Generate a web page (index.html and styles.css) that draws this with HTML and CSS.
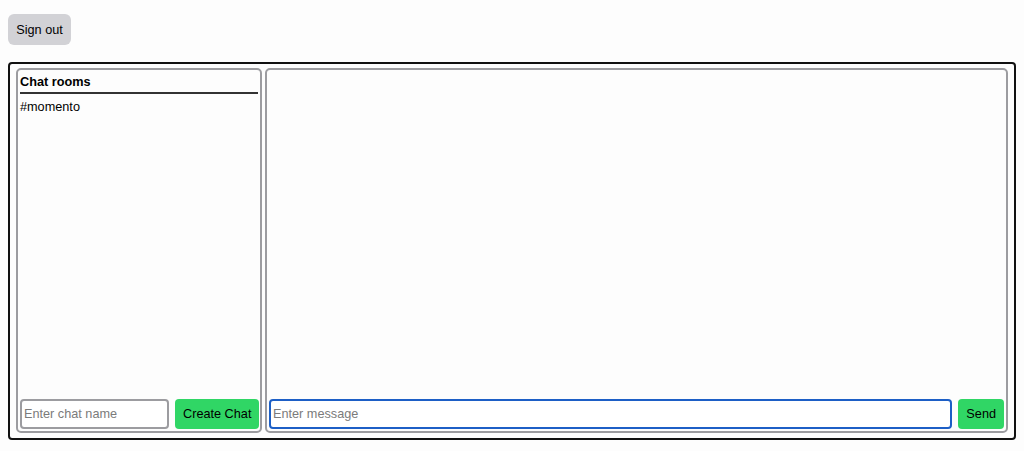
FILE: index.html
```
<!DOCTYPE html>
<html lang="en">
<head>
    <meta charset="UTF-8">
    <meta name="viewport" content="width=device-width, initial-scale=1.0">
    <title>Chat</title>
    <link rel="stylesheet" href="styles.css">
</head>
<body>
    <button type="button" class="signout">Sign out</button>

    <div class="chat-app">
        <div class="rooms">
            <h3 class="rooms-title">Chat rooms</h3>
            <ul class="room-list">
                <li>#momento</li>
            </ul>
            <form class="row-form">
                <input type="text" class="field name-field" placeholder="Enter chat name">
                <button type="submit" class="green-btn">Create Chat</button>
            </form>
        </div>
        <div class="messages">
            <div class="message-list"></div>
            <form class="row-form">
                <input type="text" class="field message-field focused" placeholder="Enter message">
                <button type="submit" class="green-btn">Send</button>
            </form>
        </div>
    </div>
</body>
</html>
```

FILE: styles.css
```
* {
    box-sizing: border-box;
}
body {
    font-family: 'Liberation Sans', Arial, sans-serif;
    font-size: 12.7px;
    color: #000;
    background: #fdfdfd;
    margin: 8px;
}
.signout {
    display: block;
    margin-top: 6px;
    height: 31px;
    width: 63px;
    padding: 0;
    border: none;
    border-radius: 6px;
    background-color: #d2d2d6;
    font-family: inherit;
    font-size: 12.7px;
    color: #000;
}
.chat-app {
    margin-top: 17px;
    height: 378px;
    border: 2px solid #111;
    border-radius: 4px;
    padding: 4px 6px 5px 6px;
    display: flex;
    gap: 3px;
}
.rooms, .messages {
    border: 2px solid #9c9ca0;
    border-radius: 5px;
    padding: 2px;
    display: flex;
    flex-direction: column;
}
.rooms {
    width: 246px;
}
.messages {
    flex: 1;
}
.rooms-title {
    margin: 3px 0 0 0;
    padding-bottom: 3px;
    font-size: 12.7px;
    font-weight: bold;
    border-bottom: 2px solid #333;
}
.room-list {
    list-style: none;
    margin: 6px 0 0 0;
    padding: 0;
    flex: 1;
}
.message-list {
    flex: 1;
}
.row-form {
    display: flex;
    gap: 6px;
}
.field {
    height: 30px;
    border: 2px solid #9c9ca0;
    border-radius: 4px;
    padding: 0 2px;
    font-family: inherit;
    font-size: 12.7px;
    background: #fff;
    outline: none;
}
.field::placeholder {
    color: #7b7b7b;
}
.name-field {
    width: 149px;
}
.message-field {
    flex: 1;
}
.message-field.focused {
    border-color: #1d5fc6;
}
.green-btn {
    height: 30px;
    border: none;
    border-radius: 4px;
    background-color: #30d665;
    font-family: inherit;
    font-size: 12.7px;
    color: #000;
    padding: 0 8px;
    white-space: nowrap;
}
```
